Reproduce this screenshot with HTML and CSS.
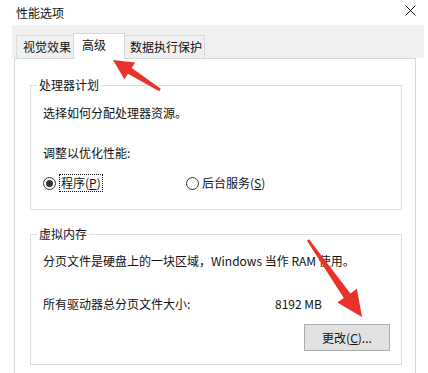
FILE: index.html
```html
<!DOCTYPE html>
<html lang="zh-CN">
<head>
    <meta charset="UTF-8">
    <title>性能选项</title>
    <link rel="stylesheet" href="styles.css">
</head>
<body>
    <div class="titlebar">
        <span class="title">性能选项</span>
        <svg class="close" width="11" height="11" viewBox="0 0 11 11">
            <path d="M0.5 0.5 L10.5 10.5 M10.5 0.5 L0.5 10.5" stroke="#111" stroke-width="1" fill="none"/>
        </svg>
    </div>

    <div class="tabs">
        <div class="tab tab-visual">视觉效果</div>
        <div class="tab tab-adv active">高级</div>
        <div class="tab tab-dep">数据执行保护</div>
    </div>

    <div class="panel">
        <fieldset class="group group-cpu">
            <legend>处理器计划</legend>
            <p class="line first">选择如何分配处理器资源。</p>
            <p class="line sub">调整以优化性能:</p>
            <div class="radios">
                <label class="radio"><span class="dot checked"></span><span class="focus">程序(<u>P</u>)</span></label>
                <label class="radio"><span class="dot"></span><span>后台服务(<u>S</u>)</span></label>
            </div>
        </fieldset>

        <fieldset class="group group-vm">
            <legend>虚拟内存</legend>
            <p class="line first">分页文件是硬盘上的一块区域，Windows 当作 RAM 使用。</p>
            <div class="size-row">
                <span>所有驱动器总分页文件大小:</span>
                <span>8192 MB</span>
            </div>
            <div class="actions">
                <button class="btn">更改(<u>C</u>)...</button>
            </div>
        </fieldset>
    </div>

    <!-- red annotation arrows drawn over the dialog -->
    <svg class="arrows" width="428" height="373" viewBox="0 0 428 373">
        <polygon fill="#e8322a" points="113,60 135.2,62.4 131.7,67.9 160.8,88.7 159.2,91.3 127.9,73.7 124.4,79.2"/>
        <polygon fill="#e8322a" points="362,317 337.3,302.6 343.8,298 307,240.7 309,239.3 350.4,293.4 356.9,288.8"/>
    </svg>
</body>
</html>
```

FILE: styles.css
```css
* {
    box-sizing: border-box;
}

body {
    margin: 0;
    width: 428px;
    height: 373px;
    overflow: hidden;
    position: relative;
    background-color: #fff;
    color: #111;
    font-family: "Noto Sans CJK SC", "Liberation Sans", sans-serif;
    font-size: 12px;
    line-height: 16px;
}

p {
    margin: 0;
}

.titlebar {
    height: 25px;
    display: flex;
    align-items: center;
    justify-content: space-between;
    padding: 0 12px 0 16px;
}

.close {
    display: block;
    margin-top: -4px;
}

.tabs {
    margin-left: 12px;
    width: 412px;
    height: 33px;
    background-color: #f0f0f0;
    display: flex;
    align-items: flex-end;
    padding-left: 4px;
}

.tab {
    height: 23px;
    border: 1px solid #d9d9d9;
    border-bottom: none;
    background-color: #f0f0f0;
    line-height: 21px;
    padding-left: 6px;
}

.tab-visual {
    width: 58px;
}

.tab-adv {
    width: 52px;
    margin-left: -1px;
}

.tab-dep {
    width: 81px;
    margin-left: -1px;
    padding-left: 5px;
}

.tab.active {
    height: 26px;
    background-color: #fff;
    margin-bottom: -1px;
    position: relative;
    z-index: 1;
    padding-left: 8px;
    line-height: 22px;
}

.panel {
    margin-left: 14px;
    width: 402px;
    height: 330px;
    border: 1px solid #d9d9d9;
    background-color: #fff;
    padding: 0 0 0 15px;
}

.group {
    margin: 0;
    width: 372px;
    border: 1px solid #dcdcdc;
    padding: 0 11px 0 12px;
}

.group legend {
    padding: 0 2px;
    margin-left: -6px;
    line-height: 14px;
}

.group-cpu {
    margin-top: 19px;
    padding-bottom: 17px;
}

.group-cpu .first {
    margin-top: 13px;
}

.group-cpu .sub {
    margin-top: 24px;
}

.radios {
    margin-top: 13px;
    display: flex;
    height: 18px;
    align-items: center;
}

.radio {
    display: flex;
    align-items: center;
}

.radio:first-child {
    width: 143px;
}

.dot {
    width: 13px;
    height: 13px;
    border: 1px solid #333;
    border-radius: 50%;
    margin-right: 3px;
    display: flex;
    align-items: center;
    justify-content: center;
}

.dot.checked::after {
    content: "";
    width: 7px;
    height: 7px;
    border-radius: 50%;
    background-color: #333;
}

.focus {
    border: 1px dotted #111;
    padding: 0 1px;
    line-height: 16px;
}

.group-vm {
    margin-top: 17px;
    padding-bottom: 13px;
}

.group-vm .first {
    margin-top: 12px;
}

.size-row {
    margin-top: 27px;
    display: grid;
    grid-template-columns: 232px auto;
}

.actions {
    margin-top: 12px;
    display: flex;
    justify-content: flex-end;
}

.btn {
    width: 86px;
    height: 27px;
    background-color: #e1e1e1;
    border: 1px solid #adadad;
    font-family: inherit;
    font-size: 12px;
    color: #111;
    padding: 0;
}

.arrows {
    position: absolute;
    top: 0;
    left: 0;
    pointer-events: none;
}
```
